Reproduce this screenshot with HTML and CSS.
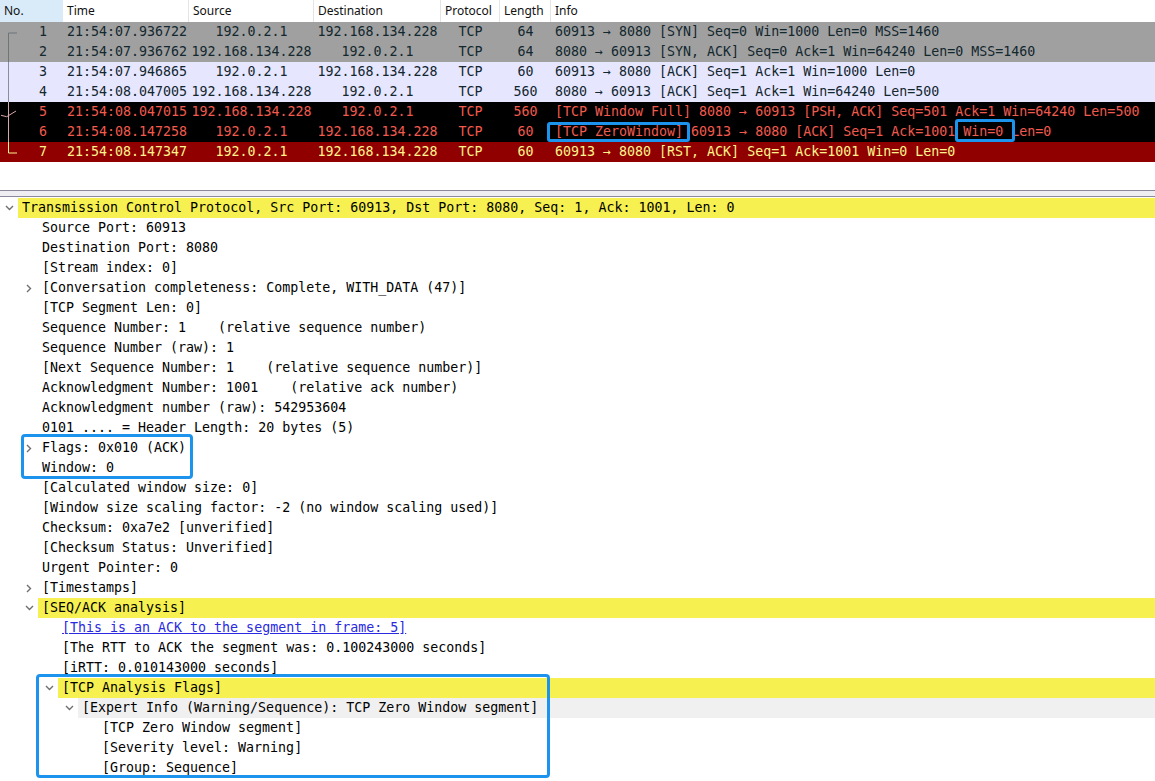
FILE: index.html
```html
<!DOCTYPE html>
<html lang="en">
<head>
<meta charset="utf-8">
<title>Wireshark - TCP ZeroWindow</title>
<link rel="stylesheet" href="styles.css">
</head>
<body>
<div class="plist">
  <div class="hdr">
    <div class="sorted">No.</div>
    <div>Time</div>
    <div>Source</div>
    <div>Destination</div>
    <div>Protocol</div>
    <div>Length</div>
    <div class="last">Info</div>
  </div>

  <div class="row syn">
    <div class="no"><svg class="rel" width="20" height="20" viewBox="0 0 20 20"><path d="M8.5 11V20M8.5 11H17"/></svg><span>1</span></div>
    <div class="t">21:54:07.936722</div><div class="c">192.0.2.1</div><div class="c">192.168.134.228</div><div class="c">TCP</div><div class="c">64</div>
    <div class="info">60913 → 8080 [SYN] Seq=0 Win=1000 Len=0 MSS=1460</div>
  </div>
  <div class="row syn">
    <div class="no"><svg class="rel" width="20" height="20" viewBox="0 0 20 20"><path d="M8.5 0V20"/></svg><span>2</span></div>
    <div class="t">21:54:07.936762</div><div class="c">192.168.134.228</div><div class="c">192.0.2.1</div><div class="c">TCP</div><div class="c">64</div>
    <div class="info">8080 → 60913 [SYN, ACK] Seq=0 Ack=1 Win=64240 Len=0 MSS=1460</div>
  </div>
  <div class="row tcp">
    <div class="no"><svg class="rel" width="20" height="20" viewBox="0 0 20 20"><path d="M8.5 0V20"/></svg><span>3</span></div>
    <div class="t">21:54:07.946865</div><div class="c">192.0.2.1</div><div class="c">192.168.134.228</div><div class="c">TCP</div><div class="c">60</div>
    <div class="info">60913 → 8080 [ACK] Seq=1 Ack=1 Win=1000 Len=0</div>
  </div>
  <div class="row tcp">
    <div class="no"><svg class="rel" width="20" height="20" viewBox="0 0 20 20"><path d="M8.5 0V20"/></svg><span>4</span></div>
    <div class="t">21:54:08.047005</div><div class="c">192.168.134.228</div><div class="c">192.0.2.1</div><div class="c">TCP</div><div class="c">560</div>
    <div class="info">8080 → 60913 [ACK] Seq=1 Ack=1 Win=64240 Len=500</div>
  </div>
  <div class="row bad">
    <div class="no"><svg class="rel" width="20" height="20" viewBox="0 0 20 20"><path d="M8.5 0V20M1 13.3L6.7 14.7L16 9"/></svg><span>5</span></div>
    <div class="t">21:54:08.047015</div><div class="c">192.168.134.228</div><div class="c">192.0.2.1</div><div class="c">TCP</div><div class="c">560</div>
    <div class="info">[TCP Window Full] 8080 → 60913 [PSH, ACK] Seq=501 Ack=1 Win=64240 Len=500</div>
  </div>
  <div class="row bad">
    <div class="no"><svg class="rel" width="20" height="20" viewBox="0 0 20 20"><path d="M8.5 0V20"/></svg><span>6</span></div>
    <div class="t">21:54:08.147258</div><div class="c">192.0.2.1</div><div class="c">192.168.134.228</div><div class="c">TCP</div><div class="c">60</div>
    <div class="info"><span class="mark mark-zero">[TCP ZeroWindow]</span> 60913 → 8080 [ACK] Seq=1 Ack=1001 <span class="mark mark-win">Win=0</span> Len=0</div>
  </div>
  <div class="row rst">
    <div class="no"><svg class="rel" width="20" height="20" viewBox="0 0 20 20"><path d="M8.5 0V11H17"/></svg><span>7</span></div>
    <div class="t">21:54:08.147347</div><div class="c">192.0.2.1</div><div class="c">192.168.134.228</div><div class="c">TCP</div><div class="c">60</div>
    <div class="info">60913 → 8080 [RST, ACK] Seq=1 Ack=1001 Win=0 Len=0</div>
  </div>
</div>

<div class="splitter"></div>

<div class="details">
  <div class="node l0 hl"><span class="tog"><svg width="9" height="6" viewBox="0 0 9 6"><path d="M1 1L4.5 4.5L8 1"/></svg></span><span class="lab">Transmission Control Protocol, Src Port: 60913, Dst Port: 8080, Seq: 1, Ack: 1001, Len: 0</span></div>
  <div class="node l1"><span class="tog"></span><span class="lab">Source Port: 60913</span></div>
  <div class="node l1"><span class="tog"></span><span class="lab">Destination Port: 8080</span></div>
  <div class="node l1"><span class="tog"></span><span class="lab">[Stream index: 0]</span></div>
  <div class="node l1"><span class="tog"><svg width="6" height="9" viewBox="0 0 6 9"><path d="M1 1L4.5 4.5L1 8"/></svg></span><span class="lab">[Conversation completeness: Complete, WITH_DATA (47)]</span></div>
  <div class="node l1"><span class="tog"></span><span class="lab">[TCP Segment Len: 0]</span></div>
  <div class="node l1"><span class="tog"></span><span class="lab">Sequence Number: 1    (relative sequence number)</span></div>
  <div class="node l1"><span class="tog"></span><span class="lab">Sequence Number (raw): 1</span></div>
  <div class="node l1"><span class="tog"></span><span class="lab">[Next Sequence Number: 1    (relative sequence number)]</span></div>
  <div class="node l1"><span class="tog"></span><span class="lab">Acknowledgment Number: 1001    (relative ack number)</span></div>
  <div class="node l1"><span class="tog"></span><span class="lab">Acknowledgment number (raw): 542953604</span></div>
  <div class="node l1"><span class="tog"></span><span class="lab">0101 .... = Header Length: 20 bytes (5)</span></div>
  <div class="node l1"><span class="tog"><svg width="6" height="9" viewBox="0 0 6 9"><path d="M1 1L4.5 4.5L1 8"/></svg></span><span class="lab">Flags: 0x010 (ACK)</span></div>
  <div class="node l1"><span class="tog"></span><span class="lab">Window: 0</span></div>
  <div class="node l1"><span class="tog"></span><span class="lab">[Calculated window size: 0]</span></div>
  <div class="node l1"><span class="tog"></span><span class="lab">[Window size scaling factor: -2 (no window scaling used)]</span></div>
  <div class="node l1"><span class="tog"></span><span class="lab">Checksum: 0xa7e2 [unverified]</span></div>
  <div class="node l1"><span class="tog"></span><span class="lab">[Checksum Status: Unverified]</span></div>
  <div class="node l1"><span class="tog"></span><span class="lab">Urgent Pointer: 0</span></div>
  <div class="node l1"><span class="tog"><svg width="6" height="9" viewBox="0 0 6 9"><path d="M1 1L4.5 4.5L1 8"/></svg></span><span class="lab">[Timestamps]</span></div>
  <div class="node l1 hl"><span class="tog"><svg width="9" height="6" viewBox="0 0 9 6"><path d="M1 1L4.5 4.5L8 1"/></svg></span><span class="lab">[SEQ/ACK analysis]</span></div>
  <div class="node l2"><span class="tog"></span><span class="lab link">[This is an ACK to the segment in frame: 5]</span></div>
  <div class="node l2"><span class="tog"></span><span class="lab">[The RTT to ACK the segment was: 0.100243000 seconds]</span></div>
  <div class="node l2"><span class="tog"></span><span class="lab">[iRTT: 0.010143000 seconds]</span></div>
  <div class="node l2 hl"><span class="tog"><svg width="9" height="6" viewBox="0 0 9 6"><path d="M1 1L4.5 4.5L8 1"/></svg></span><span class="lab">[TCP Analysis Flags]</span></div>
  <div class="node l3 gray"><span class="tog"><svg width="9" height="6" viewBox="0 0 9 6"><path d="M1 1L4.5 4.5L8 1"/></svg></span><span class="lab">[Expert Info (Warning/Sequence): TCP Zero Window segment]</span></div>
  <div class="node l4"><span class="tog"></span><span class="lab">[TCP Zero Window segment]</span></div>
  <div class="node l4"><span class="tog"></span><span class="lab">[Severity level: Warning]</span></div>
  <div class="node l4"><span class="tog"></span><span class="lab">[Group: Sequence]</span></div>

  <div class="anno anno-flags"></div>
  <div class="anno anno-analysis"></div>
</div>
</body>
</html>
```

FILE: styles.css
```css
html, body {
  margin: 0;
  padding: 0;
  background: #ffffff;
  font-family: "DejaVu Sans Mono", "Liberation Mono", monospace;
  overflow: hidden;
}

/* ---------- packet list ---------- */
.plist {
  height: 191px;
  box-sizing: border-box;
  border-bottom: 1px solid #8b8b9b;
}

.hdr,
.row {
  display: grid;
  grid-template-columns: 63px 126px 125px 127px 59px 51px 1fr;
}

.hdr {
  height: 22px;
  font-family: "Noto Sans", "DejaVu Sans", sans-serif;
  font-size: 12px;
  line-height: 22px;
  color: #111;
}

.hdr > div {
  padding-left: 4px;
  border-right: 1px solid #e4e4e4;
  white-space: nowrap;
}

.hdr > div.last {
  border-right: none;
}

.hdr .sorted {
  background: #d9eaf8;
  border-right-color: #d9eaf8;
}

.row {
  height: 20px;
  line-height: 20px;
  font-size: 13.3px;
  white-space: pre;
}

.row > div {
  overflow: hidden;
}

.row .no {
  display: flex;
  justify-content: space-between;
  padding-right: 16px;
  overflow: visible;
}

.rel {
  flex: none;
  fill: none;
  stroke-width: 1;
}

.row .t,
.row .info {
  padding-left: 4px;
}

.row .info {
  overflow: visible;
}

.row .c {
  text-align: center;
}

.syn { background: #a0a0a0; color: #12272e; }
.syn .rel { stroke: #6e7478; }

.tcp { background: #e7e6ff; color: #12272e; }
.tcp .rel { stroke: #8c8c9a; }

.bad { background: #000000; color: #f25a4e; }
.bad .rel { stroke: #d9a7a7; }

.rst { background: #910000; color: #fdf48d; }
.rst .rel { stroke: #fdf48d; }

/* annotation marks in the list */
.mark {
  position: relative;
}

.mark::after {
  content: "";
  position: absolute;
  border: 3px solid #1c94ee;
  border-radius: 3px;
}

.mark-zero::after {
  left: -8px;
  right: -7px;
  top: -2px;
  bottom: -3px;
}

.mark-win::after {
  left: -8px;
  right: -12px;
  top: -5px;
  bottom: -3px;
}

/* ---------- splitter ---------- */
.splitter {
  height: 5px;
  background: #efeff3;
  border-bottom: 1px solid #8b8b9b;
}

/* ---------- details tree ---------- */
.details {
  position: relative;
  padding-top: 1px;
  font-size: 13.3px;
  color: #000;
}

.node {
  display: flex;
  height: 20px;
  line-height: 20px;
  white-space: pre;
}

.l0 { padding-left: 0; }
.l1 { padding-left: 20px; }
.l2 { padding-left: 40px; }
.l3 { padding-left: 60px; }
.l4 { padding-left: 80px; }

.tog {
  width: 18px;
  flex: none;
  display: flex;
  align-items: center;
  justify-content: center;
}

.tog svg {
  fill: none;
  stroke: #6f6f6f;
  stroke-width: 1.4;
}

.lab {
  padding-left: 4px;
}

.hl .lab {
  flex: 1;
  background: #f6f150;
}

.gray .lab {
  flex: 1;
  background: #f0f0f0;
}

.link {
  color: #2a2ae0;
  text-decoration: underline;
}

/* annotation boxes over the tree */
.anno {
  position: absolute;
  box-sizing: border-box;
  border: 3px solid #1c94ee;
  border-radius: 4px;
  pointer-events: none;
}

.anno-flags {
  left: 21px;
  top: 237px;
  width: 172px;
  height: 45px;
}

.anno-analysis {
  left: 36px;
  top: 477px;
  width: 514px;
  height: 104px;
}
```
